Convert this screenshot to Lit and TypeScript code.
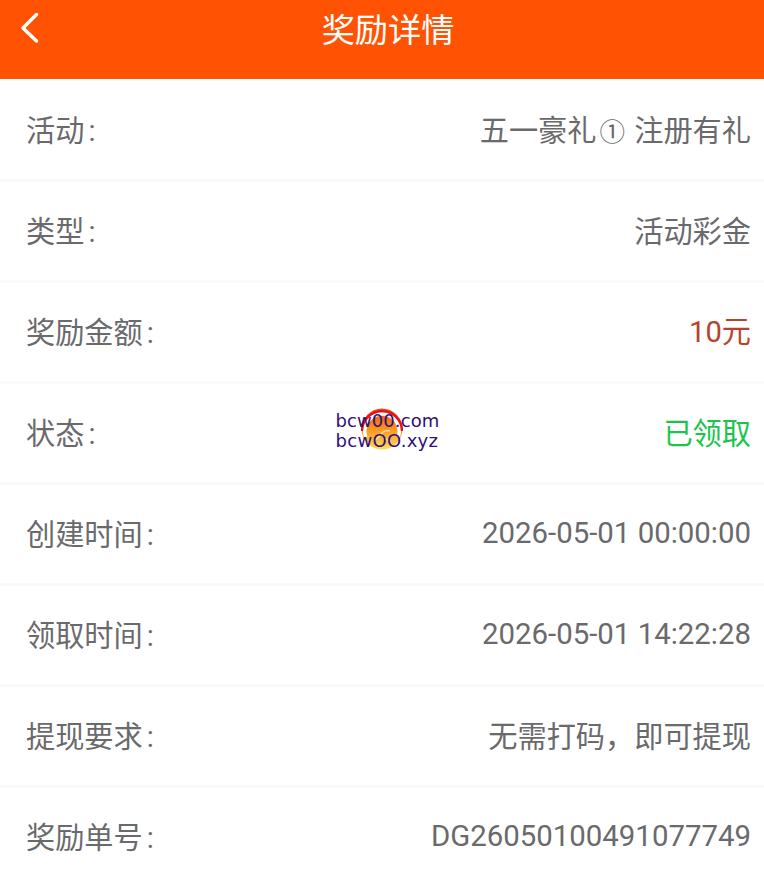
import { LitElement, html, css, svg, TemplateResult } from 'lit';
import { customElement } from 'lit/decorators.js';

type Row = { label: string; value: string | TemplateResult; tone?: 'money' | 'ok' | 'num' };

const ROWS: Row[] = [
  { label: '活动', value: html`五一豪礼<span class="circled">①</span> 注册有礼` },
  { label: '类型', value: '活动彩金' },
  { label: '奖励金额', value: '10元', tone: 'money' },
  { label: '状态', value: '已领取', tone: 'ok' },
  { label: '创建时间', value: '2026-05-01 00:00:00', tone: 'num' },
  { label: '领取时间', value: '2026-05-01 14:22:28', tone: 'num' },
  { label: '提现要求', value: '无需打码，即可提现' },
  { label: '奖励单号', value: 'DG26050100491077749', tone: 'num' },
];

const badge = svg`
  <defs>
    <linearGradient id="paw" x1="0" y1="0" x2="0" y2="1">
      <stop offset="0" stop-color="#ee4a1c" />
      <stop offset="0.5" stop-color="#f9971f" />
      <stop offset="1" stop-color="#fddc58" />
    </linearGradient>
  </defs>
  <circle cx="21" cy="22" r="20.5" fill="url(#paw)" />
  <path d="M4.8 30A17.2 17.2 0 1 1 37.2 30" fill="none" stroke="#fff" stroke-width="3.4" />
  <path d="M1 24A20 20 0 1 1 41 24" fill="none" stroke="#e5121c" stroke-width="2.4" />
  <path d="M20 27c2-3 6-4 9-3M20 27c-2 3-5 6-8 7M21 28c2 3 5 6 9 6" fill="none" stroke="#fde6c0" stroke-width="1.3" />
`;

@customElement('app-root')
export class AppRoot extends LitElement {
  static styles = css`
    :host {
      display: block;
      position: relative;
      height: 886px;
      overflow: hidden;
      background: #fff;
      font-family: 'Roboto', 'Noto Sans CJK SC', sans-serif;
    }
    .bar {
      height: 79px;
      background: #ff5303;
      display: flex;
      align-items: center;
      justify-content: center;
      position: relative;
      padding: 0 0 18px 12px;
      box-sizing: border-box;
    }
    .bar h1 {
      margin: 0;
      color: #fff;
      font-size: 33.2px;
      font-weight: 400;
      line-height: 58px;
    }
    .back {
      position: absolute;
      left: 18.5px;
      top: 11px;
      width: 21px;
      height: 33px;
    }
    .list {
      padding-top: 2px;
    }
    .row {
      height: 101px;
      box-sizing: border-box;
      padding: 0 13px 5px 26px;
      display: flex;
      align-items: center;
      justify-content: space-between;
      border-bottom: 3px solid #f9f9f9;
      font-size: 29.2px;
      color: #6a6a6d;
    }
    .label::after {
      content: ':';
      margin-left: 4px;
    }
    .money {
      color: #b9422c;
      padding-bottom: 2px;
    }
    .ok { color: #1cc44c; }
    .num {
      font-size: 29.4px;
      padding-top: 3px;
    }
    .circled {
      font-size: 25.5px;
      margin: 0 2px 0 3px;
    }
    .mark {
      position: absolute;
      left: 335.5px;
      top: 411px;
      width: 104px;
      height: 40px;
      color: #2f0f78;
      font-family: 'DejaVu Sans', sans-serif;
      font-size: 18px;
      line-height: 19.5px;
      letter-spacing: 0.08px;
    }
    .mark svg {
      position: absolute;
      left: 25.5px;
      top: -4px;
      width: 42px;
      height: 44px;
    }
    .mark span {
      position: relative;
      display: block;
      white-space: nowrap;
    }
    .mark span + span {
      letter-spacing: 0.3px;
    }
  `;

  render() {
    return html`
      <header class="bar">
        <svg class="back" viewBox="0 0 21 33">
          <path d="M17.5 3.5 4 17l13.5 13" fill="none" stroke="#fff" stroke-width="3.5" stroke-linecap="round" stroke-linejoin="round" />
        </svg>
        <h1>奖励详情</h1>
      </header>
      <div class="list">
        ${ROWS.map(
          (r) => html`
            <div class="row">
              <span class="label">${r.label}</span>
              <span class=${r.tone ?? ''}>${r.value}</span>
            </div>
          `
        )}
      </div>
      <div class="mark">
        <svg viewBox="0 0 42 44">${badge}</svg>
        <span>bcw00.com</span>
        <span>bcwOO.xyz</span>
      </div>
    `;
  }
}
